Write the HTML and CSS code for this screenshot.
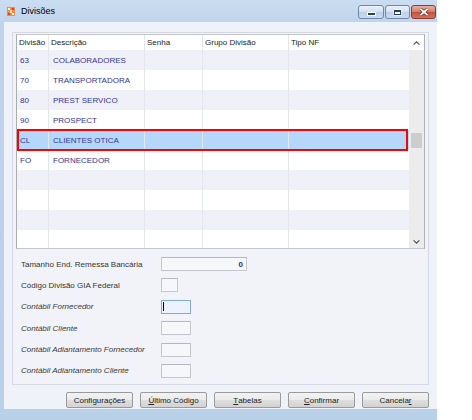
FILE: index.html
```html
<!DOCTYPE html>
<html lang="pt">
<head>
<meta charset="utf-8">
<title>Divisões</title>
<link rel="stylesheet" href="styles.css">
</head>
<body>
<div class="window">
  <div class="titlebar">
    <svg class="appicon" width="8" height="9" viewBox="0 0 8 9">
      <rect x="0" y="0" width="8" height="9" fill="#f58a3c"/>
      <rect x="1" y="1" width="2" height="2" fill="#fff3e0"/>
      <rect x="5" y="1" width="2" height="2" fill="#e0401a"/>
      <rect x="3" y="3" width="2" height="3" fill="#fde0c0"/>
      <rect x="1" y="6" width="2" height="2" fill="#e0401a"/>
      <rect x="5" y="6" width="2" height="2" fill="#fff3e0"/>
    </svg>
    <span class="title">Divisões</span>
    <div class="winbtns">
      <div class="wb min">
        <svg width="9" height="4" viewBox="0 0 9 4"><rect x="0.5" y="0.5" width="8" height="3" fill="#2b3f5c" stroke="#ffffff" stroke-width="1"/></svg>
      </div>
      <div class="wb max">
        <svg width="9" height="7" viewBox="0 0 9 7"><rect x="0.5" y="0.5" width="8" height="6" fill="#ffffff"/><rect x="1.5" y="1.5" width="6" height="4" fill="none" stroke="#2b3f5c" stroke-width="1"/><rect x="2" y="2" width="5" height="1" fill="#2b3f5c"/></svg>
      </div>
      <div class="wb close">
        <svg width="10" height="8" viewBox="0 0 10 8"><path d="M1.5 1 L8.5 7 M8.5 1 L1.5 7" stroke="#5a1c14" stroke-width="3.2"/><path d="M1.5 1 L8.5 7 M8.5 1 L1.5 7" stroke="#ffffff" stroke-width="1.8"/></svg>
      </div>
    </div>
  </div>

  <div class="client">
    <div class="panel">
      <div class="grid">
        <div class="table">
          <div class="row head">
            <div class="c c1">Divisão</div>
            <div class="c c2">Descrição</div>
            <div class="c c3">Senha</div>
            <div class="c c4">Grupo Divisão</div>
            <div class="c c5">Tipo NF</div>
          </div>
          <div class="row odd">
            <div class="c c1">63</div><div class="c c2">COLABORADORES</div><div class="c c3"></div><div class="c c4"></div><div class="c c5"></div>
          </div>
          <div class="row">
            <div class="c c1">70</div><div class="c c2">TRANSPORTADORA</div><div class="c c3"></div><div class="c c4"></div><div class="c c5"></div>
          </div>
          <div class="row odd">
            <div class="c c1">80</div><div class="c c2">PREST SERVICO</div><div class="c c3"></div><div class="c c4"></div><div class="c c5"></div>
          </div>
          <div class="row">
            <div class="c c1">90</div><div class="c c2">PROSPECT</div><div class="c c3"></div><div class="c c4"></div><div class="c c5"></div>
          </div>
          <div class="row sel">
            <div class="c c1">CL</div><div class="c c2">CLIENTES OTICA</div><div class="c c3"></div><div class="c c4"></div><div class="c c5"></div>
          </div>
          <div class="row">
            <div class="c c1">FO</div><div class="c c2">FORNECEDOR</div><div class="c c3"></div><div class="c c4"></div><div class="c c5"></div>
          </div>
          <div class="row odd">
            <div class="c c1"></div><div class="c c2"></div><div class="c c3"></div><div class="c c4"></div><div class="c c5"></div>
          </div>
          <div class="row">
            <div class="c c1"></div><div class="c c2"></div><div class="c c3"></div><div class="c c4"></div><div class="c c5"></div>
          </div>
          <div class="row odd">
            <div class="c c1"></div><div class="c c2"></div><div class="c c3"></div><div class="c c4"></div><div class="c c5"></div>
          </div>
          <div class="row">
            <div class="c c1"></div><div class="c c2"></div><div class="c c3"></div><div class="c c4"></div><div class="c c5"></div>
          </div>
        </div>
        <div class="vscroll">
          <div class="arrow up">
            <svg width="7" height="4" viewBox="0 0 7 4"><path d="M0.6 3.6 L3.5 0.9 L6.4 3.6" fill="none" stroke="#555" stroke-width="1.2"/></svg>
          </div>
          <div class="track"><div class="thumb"></div></div>
          <div class="arrow down">
            <svg width="7" height="4" viewBox="0 0 7 4"><path d="M0.6 0.4 L3.5 3.1 L6.4 0.4" fill="none" stroke="#555" stroke-width="1.2"/></svg>
          </div>
        </div>
      </div>

      <div class="fields">
        <label class="lbl">Tamanho End. Remessa Bancária</label>
        <div class="inp w86 num">0</div>
        <label class="lbl">Código Divisão GIA Federal</label>
        <div class="inp w17"></div>
        <label class="lbl it">Contábil Fornecedor</label>
        <div class="inp w30 focus"><span class="caret"></span></div>
        <label class="lbl it">Contábil Cliente</label>
        <div class="inp w30"></div>
        <label class="lbl it">Contábil Adiantamento Fornecedor</label>
        <div class="inp w30"></div>
        <label class="lbl it">Contábil Adiantamento Cliente</label>
        <div class="inp w30"></div>
      </div>
    </div>

    <div class="buttons">
      <div class="btn">Confi<u>g</u>urações</div>
      <div class="btn"><u>Ú</u>ltimo Código</div>
      <div class="btn"><u>T</u>abelas</div>
      <div class="btn"><u>C</u>onfirmar</div>
      <div class="btn">Cancela<u>r</u></div>
    </div>
  </div>
</div>
</body>
</html>
```

FILE: styles.css
```css
html, body {
  margin: 0;
  padding: 0;
  background: #ffffff;
}

body {
  font-family: "Liberation Sans", Arial, sans-serif;
  color: #222;
}

.window {
  width: 437px;
  height: 420px;
  display: flex;
  flex-direction: column;
  background: linear-gradient(180deg, #cadcf0 0px, #c0d5ec 22px, #b9d0e9 100%);
}

/* ---------- title bar ---------- */
.titlebar {
  height: 22px;
  flex: none;
  display: flex;
  align-items: center;
  padding-left: 7px;
  box-sizing: border-box;
}

.appicon {
  flex: none;
  margin-right: 6px;
  margin-top: 1px;
}

.title {
  flex: 1;
  font-size: 9px;
  color: #000;
}

.winbtns {
  align-self: flex-start;
  margin-top: 5px;
  margin-right: 1px;
  display: flex;
  gap: 1px;
}

.wb {
  height: 14px;
  box-sizing: border-box;
  border: 1px solid #6f88a8;
  border-radius: 3px;
  display: flex;
  align-items: center;
  justify-content: center;
  background: linear-gradient(180deg, #eaf1f9 0%, #d3e1f0 48%, #bccfe6 52%, #cadbee 100%);
}

.wb.min { width: 26px; }
.wb.min svg { margin-top: 4px; }
.wb.max { width: 25px; }
.wb.close {
  width: 25px;
  border-color: #8a3a2e;
  background: linear-gradient(180deg, #eab0a2 0%, #d87c69 48%, #c4503c 52%, #d2735e 100%);
}

/* ---------- client ---------- */
.client {
  flex: 1;
  margin: 0 0 11px 4px;
  padding: 10px 8px 0 8px;
  background: #eff2f8;
  display: flex;
  flex-direction: column;
}

.panel {
  height: 353px;
  flex: none;
  box-sizing: border-box;
  border: 1px solid #d6d9e1;
  background: #f2f3f8;
  padding: 1px 3px 0 3px;
}

/* ---------- grid ---------- */
.grid {
  height: 215px;
  box-sizing: border-box;
  border: 1px solid #c3c6cd;
  border-right-color: #adb1b8;
  border-left-color: #a9adb4;
  background: #ffffff;
  display: flex;
  overflow: hidden;
}

.table {
  width: 392px;
  flex: none;
  overflow: hidden;
}

.row {
  display: flex;
  height: 20px;
}

.row.head {
  height: 15px;
  background: #ffffff;
}

.row.odd { background: #f0f1f8; }

.row.sel {
  background: #b5d8fa;
  position: relative;
}

.row.sel::after {
  content: "";
  position: absolute;
  left: 0;
  right: 1px;
  top: -1px;
  bottom: -1px;
  border: 2px solid #ff0000;
  pointer-events: none;
}

.c {
  box-sizing: border-box;
  border-right: 1px solid #e4e6ed;
  padding-left: 3px;
  font-size: 8px;
  color: #343499;
  display: flex;
  align-items: center;
  white-space: nowrap;
  overflow: hidden;
}

.head .c {
  color: #222;
  padding-left: 2px;
}

.c1 { width: 32px; }
.c2 { width: 96px; padding-left: 4px; }
.c3 { width: 58px; }
.c4 { width: 86px; }
.c5 { width: 120px; border-right: 0; }

.vscroll {
  width: 15px;
  flex: none;
  display: flex;
  flex-direction: column;
  background: #ececec;
}

.arrow {
  display: flex;
  align-items: center;
  justify-content: center;
}

.arrow.up {
  height: 15px;
  background: #ffffff;
}

.arrow.down {
  height: 13px;
}

.track {
  flex: 1;
}

.thumb {
  margin: 83px 2px 0 2px;
  height: 15px;
  background: #cdcdcd;
}

/* ---------- fields ---------- */
.fields {
  display: grid;
  grid-template-columns: 140px auto;
  row-gap: 7.4px;
  padding: 8px 0 0 5px;
  align-items: center;
  justify-items: start;
}

.lbl {
  font-size: 8px;
  color: #333;
  white-space: nowrap;
}

.lbl.it {
  font-style: italic;
  color: #3a3a3a;
}

.inp {
  height: 14px;
  box-sizing: border-box;
  border: 1px solid #c4c7cf;
  border-top-color: #b4b7bf;
  background: #f6f7fb;
  font-size: 8px;
  color: #2e2e80;
  display: flex;
  align-items: center;
}

.inp.num {
  justify-content: flex-end;
  padding-right: 3px;
  font-weight: bold;
}

.w86 { width: 86px; }
.w17 { width: 17px; }
.w30 { width: 30px; }

.inp.focus {
  border-color: #7fabdc;
  background: #edf3fc;
}

.caret {
  width: 1px;
  height: 9px;
  margin-left: 1px;
  background: #000;
}

/* ---------- buttons ---------- */
.buttons {
  display: flex;
  justify-content: flex-end;
  gap: 7px;
  margin-top: 7px;
}

.btn {
  width: 67px;
  height: 16px;
  box-sizing: border-box;
  border: 1px solid #9a9a9a;
  border-radius: 2px;
  background: linear-gradient(180deg, #f2f2f2 0%, #ebebeb 48%, #dedede 52%, #d3d3d3 100%);
  font-size: 8px;
  color: #222;
  display: flex;
  align-items: center;
  justify-content: center;
}

.btn u {
  text-decoration-thickness: 1px;
  text-underline-offset: 1px;
}
```
